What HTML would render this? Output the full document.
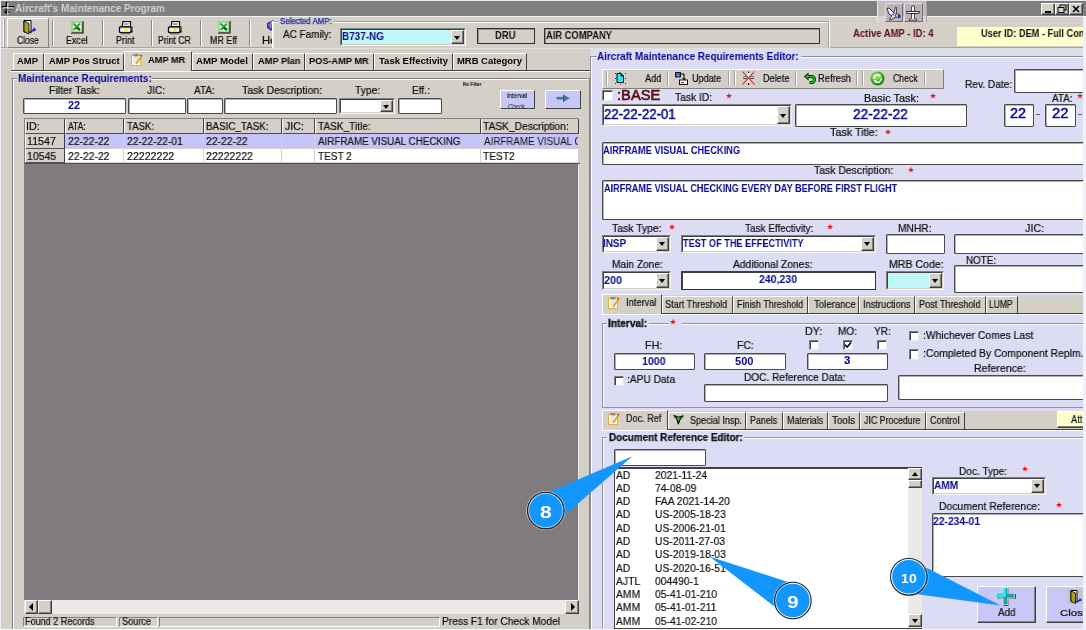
<!DOCTYPE html>
<html><head><meta charset="utf-8"><style>
html,body{margin:0;padding:0;width:1086px;height:630px;overflow:hidden;position:relative;font-family:"Liberation Sans",sans-serif}
body>div,body>svg{position:absolute}
body>div>div{position:absolute}
.t{height:20px;line-height:20px;white-space:nowrap;transform-origin:0 0;will-change:transform}
</style></head><body>
<div style="left:0px;top:0px;width:1086px;height:630px;background:#d4d0c8"></div>
<div style="left:0px;top:0px;width:1px;height:630px;background:#eef2fa"></div>
<div style="left:1px;top:1px;width:1085px;height:15px;background:#807f80"></div>
<div style="left:0px;top:0px;width:1086px;height:1px;background:#e6ecf6"></div>
<svg style="left:1px;top:1px" width="15" height="14" viewBox="0 0 15 14"><path d="M5.5 1 V13 M0.5 5.8 H13 M3.3 10.8 H8.5" stroke="#000" stroke-width="1.8"/><path d="M6.8 2 V13.5 M1.5 6.8 H12.5" stroke="#fff" stroke-width="1"/><path d="M2.5 8.5 H11.5" stroke="#555" stroke-width="1"/></svg>
<div class="t" style="left:15.45px;top:-1.30px;font-size:10.17px;font-weight:bold;color:#d4d0cc;transform:scaleX(0.9789);">Aircraft's Maintenance Program</div>
<div style="left:1041px;top:3px;width:14px;height:12px;background:#d4d0c8;border-top:1px solid #fff;border-left:1px solid #fff;border-bottom:1px solid #404040;border-right:1px solid #404040;box-sizing:border-box"></div>
<div style="left:1042px;top:4px;width:12px;height:10px;border-bottom:1px solid #808080;border-right:1px solid #808080;box-sizing:border-box"></div>
<div style="left:1055px;top:3px;width:14px;height:12px;background:#d4d0c8;border-top:1px solid #fff;border-left:1px solid #fff;border-bottom:1px solid #404040;border-right:1px solid #404040;box-sizing:border-box"></div>
<div style="left:1056px;top:4px;width:12px;height:10px;border-bottom:1px solid #808080;border-right:1px solid #808080;box-sizing:border-box"></div>
<div style="left:1069px;top:3px;width:14px;height:12px;background:#d4d0c8;border-top:1px solid #fff;border-left:1px solid #fff;border-bottom:1px solid #404040;border-right:1px solid #404040;box-sizing:border-box"></div>
<div style="left:1070px;top:4px;width:12px;height:10px;border-bottom:1px solid #808080;border-right:1px solid #808080;box-sizing:border-box"></div>
<svg style="left:1041px;top:3px" width="42" height="12" viewBox="0 0 42 12"><rect x="4" y="8" width="6" height="2" fill="#000"/><rect x="19" y="2" width="6" height="5" fill="none" stroke="#000" stroke-width="1"/><rect x="17" y="4.5" width="6" height="5" fill="#d4d0c8" stroke="#000" stroke-width="1"/><path d="M32 3 L38 9 M38 3 L32 9" stroke="#000" stroke-width="1.6"/></svg>
<div style="left:1px;top:16px;width:1085px;height:1px;background:#f4f4f4"></div>
<div style="left:1px;top:47px;width:1085px;height:1px;background:#a8a4a0"></div>
<div style="left:1px;top:48px;width:1085px;height:1px;background:#e4e2de"></div>
<div style="left:3px;top:19px;width:1px;height:28px;background:#fff"></div>
<div style="left:4px;top:19px;width:1px;height:28px;background:#a0a0a0"></div>
<div style="left:7px;top:18px;width:42px;height:30px;background:#d4d0c8;border-top:1px solid #fff;border-left:1px solid #fff;border-bottom:1px solid #808080;border-right:1px solid #808080;box-sizing:border-box"></div>
<div style="left:52px;top:20px;width:1px;height:26px;background:#888888"></div>
<div style="left:53px;top:20px;width:1px;height:26px;background:#fff"></div>
<div style="left:102px;top:20px;width:1px;height:26px;background:#888888"></div>
<div style="left:103px;top:20px;width:1px;height:26px;background:#fff"></div>
<div style="left:151px;top:20px;width:1px;height:26px;background:#888888"></div>
<div style="left:152px;top:20px;width:1px;height:26px;background:#fff"></div>
<div style="left:200px;top:20px;width:1px;height:26px;background:#888888"></div>
<div style="left:201px;top:20px;width:1px;height:26px;background:#fff"></div>
<div style="left:249px;top:20px;width:1px;height:26px;background:#888888"></div>
<div style="left:250px;top:20px;width:1px;height:26px;background:#fff"></div>
<div class="t" style="left:16.57px;top:30.70px;font-size:10.17px;font-weight:normal;color:#0c0c0c;transform:scaleX(0.8373);-webkit-text-stroke:0.2px #0c0c0c;">Close</div>
<div class="t" style="left:65.79px;top:30.70px;font-size:10.17px;font-weight:normal;color:#0c0c0c;transform:scaleX(0.8741);-webkit-text-stroke:0.2px #0c0c0c;">Excel</div>
<div class="t" style="left:115.88px;top:30.70px;font-size:10.17px;font-weight:normal;color:#0c0c0c;transform:scaleX(0.8858);-webkit-text-stroke:0.2px #0c0c0c;">Print</div>
<div class="t" style="left:158.20px;top:30.70px;font-size:10.17px;font-weight:normal;color:#0c0c0c;transform:scaleX(0.8551);-webkit-text-stroke:0.2px #0c0c0c;">Print CR</div>
<div class="t" style="left:209.99px;top:30.70px;font-size:10.17px;font-weight:normal;color:#0c0c0c;transform:scaleX(0.8766);-webkit-text-stroke:0.2px #0c0c0c;">MR Eff</div>
<div class="t" style="left:262.10px;top:30.70px;font-size:10.17px;font-weight:normal;color:#0c0c0c;transform:scaleX(1.1062);-webkit-text-stroke:0.2px #0c0c0c;">He</div>
<svg style="left:21px;top:19px" width="16" height="16" viewBox="0 0 16 16"><path d="M3 1.5 H10 V13 H3Z" fill="#fff" stroke="#000"/><path d="M3 2 L8 4.5 V15 L3 12.5 Z" fill="#a8a020" stroke="#000" stroke-width="0.8"/><path d="M9.5 14 Q11 10.5 13.5 11" stroke="#2020c0" stroke-width="1.5" fill="none"/><path d="M12 8.5 L15.5 10.5 L12.5 13Z" fill="#2020c0"/></svg>
<svg style="left:71px;top:21px" width="14" height="14" viewBox="0 0 14 14"><rect x="0" y="0" width="12" height="12" fill="#58a858"/><path d="M12 0 V12 H0" stroke="#4a4a30" stroke-width="1.6" fill="none"/><path d="M0.5 11.5 V0.5 H11.5" stroke="#90e090" stroke-width="1" fill="none"/><rect x="1.5" y="1.5" width="9" height="9" fill="#f4fff4"/><path d="M2.5 2.5 L9 9 M9 2.5 L2.5 9" stroke="#30a030" stroke-width="2"/><path d="M5.5 6.5 L9 9" stroke="#007000" stroke-width="2.2"/></svg>
<svg style="left:218px;top:21px" width="14" height="14" viewBox="0 0 14 14"><rect x="0" y="0" width="12" height="12" fill="#58a858"/><path d="M12 0 V12 H0" stroke="#4a4a30" stroke-width="1.6" fill="none"/><path d="M0.5 11.5 V0.5 H11.5" stroke="#90e090" stroke-width="1" fill="none"/><rect x="1.5" y="1.5" width="9" height="9" fill="#f4fff4"/><path d="M2.5 2.5 L9 9 M9 2.5 L2.5 9" stroke="#30a030" stroke-width="2"/><path d="M5.5 6.5 L9 9" stroke="#007000" stroke-width="2.2"/></svg>
<svg style="left:118px;top:20px" width="16" height="15" viewBox="0 0 16 15"><path d="M5 1.5 H12.5 V6.5 H4.2 Z" fill="#fff" stroke="#000" stroke-width="1.2"/><path d="M6 3.3 H11 M6 4.6 H10.5" stroke="#777" stroke-width="0.8"/><rect x="1.5" y="6.8" width="11.5" height="5.8" rx="1" fill="#d8d8d8" stroke="#000" stroke-width="1.3"/><rect x="2.6" y="8.8" width="9.5" height="2" fill="#fff"/><rect x="6.8" y="8.5" width="2.6" height="2.5" fill="#f0f000"/><rect x="13" y="6.5" width="1.6" height="6" fill="#000"/><rect x="13.4" y="7.6" width="0.9" height="0.9" fill="#fff"/><rect x="13.4" y="9.4" width="0.9" height="0.9" fill="#fff"/><rect x="3" y="12.8" width="9" height="1.6" fill="#707070"/></svg>
<svg style="left:167px;top:20px" width="16" height="15" viewBox="0 0 16 15"><path d="M5 1.5 H12.5 V6.5 H4.2 Z" fill="#fff" stroke="#000" stroke-width="1.2"/><path d="M6 3.3 H11 M6 4.6 H10.5" stroke="#777" stroke-width="0.8"/><rect x="1.5" y="6.8" width="11.5" height="5.8" rx="1" fill="#d8d8d8" stroke="#000" stroke-width="1.3"/><rect x="2.6" y="8.8" width="9.5" height="2" fill="#fff"/><rect x="6.8" y="8.5" width="2.6" height="2.5" fill="#f0f000"/><rect x="13" y="6.5" width="1.6" height="6" fill="#000"/><rect x="13.4" y="7.6" width="0.9" height="0.9" fill="#fff"/><rect x="13.4" y="9.4" width="0.9" height="0.9" fill="#fff"/><rect x="3" y="12.8" width="9" height="1.6" fill="#707070"/></svg>
<svg style="left:265px;top:19px" width="12" height="14" viewBox="0 0 12 14"><path d="M2 4 L8 1 L11 6 L6 12 L2 9Z" fill="#4030a0"/><path d="M3 5 L8 3 L9 6 L5 10Z" fill="#8070d0"/><circle cx="8" cy="3.5" r="1.8" fill="#e8e040"/></svg>
<div style="left:877px;top:1px;width:50px;height:21px;background:#c4bcbc;border-left:1px solid #ece8e8;border-right:1px solid #a8a4a4;box-sizing:border-box"></div>
<div style="left:878px;top:16px;width:48px;height:6px;background:#d8d4d0"></div>
<div style="left:884.5px;top:3px;width:18.5px;height:18.5px;background:#bab2b8;border-top:1px solid #e0dcdc;border-left:1px solid #e0dcdc;border-bottom:1px solid #707070;border-right:1px solid #707070;box-sizing:border-box"></div>
<div style="left:904px;top:3px;width:18.5px;height:18.5px;background:#bab2b8;border-top:1px solid #e0dcdc;border-left:1px solid #e0dcdc;border-bottom:1px solid #707070;border-right:1px solid #707070;box-sizing:border-box"></div>
<svg style="left:884px;top:3px" width="20" height="19" viewBox="0 0 20 19"><path d="M3 5.5 L5 5 L10 10 L15 11.5 Q17.5 12.5 16 14.5 L11 14 L7 17 L5.5 16.5 L8 13 L5 11 Z" fill="#f4f4f8" stroke="#222" stroke-width="0.9"/><path d="M10 9.5 L11.5 4 L12.5 4.5 L12.5 11" fill="#e8e8e8" stroke="#222" stroke-width="0.8"/><circle cx="9" cy="11.5" r="0.9" fill="#3030c0"/><circle cx="11.5" cy="12.5" r="0.9" fill="#3030c0"/><circle cx="14.8" cy="13" r="1.2" fill="#2020e0"/></svg>
<svg style="left:904px;top:3px" width="19" height="19" viewBox="0 0 19 19"><path d="M7.5 3.5 Q9 2 10.5 3.5 V15.5 L12.5 16 V17.5 L9 17 L5.5 17.5 V16 L7.5 15.5 Z" fill="#f4f4f4" stroke="#222" stroke-width="0.8"/><path d="M2.5 8.5 H15.5 Q16 10.5 14 10.5 H4 Q2 10.5 2.5 8.5Z" fill="#f0f0f0" stroke="#222" stroke-width="0.9"/></svg>
<div style="left:272px;top:21px;width:558px;height:27px;background:#d4d0c8"></div>
<div style="left:272px;top:21px;width:1px;height:27px;background:#fff"></div>
<div style="left:273px;top:22px;width:1px;height:26px;background:#f0f0f0"></div>
<div style="left:273px;top:21px;width:556px;height:1px;background:#a0a0a0"></div>
<div style="left:274px;top:22px;width:555px;height:1px;background:#fff"></div>
<div style="left:829px;top:21px;width:1px;height:27px;background:#fff"></div>
<div style="left:828px;top:21px;width:1px;height:27px;background:#a0a0a0"></div>
<div style="left:278px;top:20px;width:56px;height:4px;background:#d4d0c8"></div>
<div class="t" style="left:279.64px;top:12.30px;font-size:8.14px;font-weight:normal;color:#2020a8;transform:scaleX(0.9714);-webkit-text-stroke:0.25px #2020a8">Selected AMP:</div>
<div class="t" style="left:283.40px;top:23.80px;font-size:10.76px;font-weight:normal;color:#0c0c0c;transform:scaleX(0.9220);-webkit-text-stroke:0.2px #0c0c0c;">AC Family:</div>
<div style="left:340px;top:28px;width:126px;height:18px;background:#c0f8f8;border-top:1px solid #808080;border-left:1px solid #808080;border-bottom:1px solid #f4f4f4;border-right:1px solid #f4f4f4;box-sizing:border-box"></div>
<div style="left:341px;top:29px;width:124px;height:16px;border-top:1px solid #404040;border-left:1px solid #404040;border-bottom:1px solid #d4d0c8;border-right:1px solid #d4d0c8;box-sizing:border-box"></div>
<div style="left:451px;top:30px;width:13px;height:14px;background:#d4d0c8;border-top:1px solid #fff;border-left:1px solid #fff;border-bottom:1px solid #404040;border-right:1px solid #404040;box-sizing:border-box"></div>
<div style="left:452px;top:31px;width:11px;height:12px;border-bottom:1px solid #808080;border-right:1px solid #808080;box-sizing:border-box"></div>
<div style="left:454.0px;top:35.5px;width:0;height:0;border-left:3.5px solid transparent;border-right:3.5px solid transparent;border-top:4px solid #000"></div>
<div class="t" style="left:341.85px;top:26.10px;font-size:11.05px;font-weight:bold;color:#0c0c8c;transform:scaleX(0.9008);">B737-NG</div>
<div style="left:477px;top:28px;width:58px;height:16px;background:#d4d0c8;border:1px solid #303030;box-sizing:border-box"></div>
<div style="left:478px;top:29px;width:56px;height:14px;border-top:1px solid #909090;border-left:1px solid #909090;box-sizing:border-box"></div>
<div class="t" style="left:495.39px;top:25.40px;font-size:11.05px;font-weight:bold;color:#111;transform:scaleX(0.8544);">DRU</div>
<div style="left:544px;top:28px;width:276px;height:16px;background:#d4d0c8;border:1px solid #303030;box-sizing:border-box"></div>
<div style="left:545px;top:29px;width:274px;height:14px;border-top:1px solid #909090;border-left:1px solid #909090;box-sizing:border-box"></div>
<div class="t" style="left:545.77px;top:25.40px;font-size:11.05px;font-weight:bold;color:#111;transform:scaleX(0.8484);">AIR COMPANY</div>
<div class="t" style="left:852.86px;top:23.75px;font-size:10.03px;font-weight:bold;color:#5c0a10;transform:scaleX(0.9459);">Active AMP - ID: 4</div>
<div style="left:957px;top:27px;width:126px;height:19px;background:#ffffcc"></div>
<div class="t" style="left:981.05px;top:23.75px;font-size:10.03px;font-weight:bold;color:#111;transform:scaleX(0.9200);">User ID: DEM - Full Con</div>
<div style="left:11px;top:70px;width:580px;height:1px;background:#404040"></div>
<div style="left:11px;top:71px;width:580px;height:1px;background:#fff"></div>
<div style="left:13px;top:53px;width:31px;height:17px;background:#d4d0c8;border-left:1px solid #fff;border-top:1px solid #fff;border-right:1px solid #404040;box-sizing:border-box"></div>
<div class="t" style="left:17.27px;top:51.15px;font-size:9.45px;font-weight:bold;color:#000;transform:scaleX(0.9925);">AMP</div>
<div style="left:44px;top:53px;width:80px;height:17px;background:#d4d0c8;border-left:1px solid #fff;border-top:1px solid #fff;border-right:1px solid #404040;box-sizing:border-box"></div>
<div class="t" style="left:49.17px;top:51.15px;font-size:9.45px;font-weight:bold;color:#000;transform:scaleX(0.9931);">AMP Pos Struct</div>
<div style="left:124px;top:51px;width:68px;height:20px;background:#d4d0c8;border-left:1px solid #fff;border-top:1px solid #fff;border-right:1px solid #404040;box-sizing:border-box"></div>
<div class="t" style="left:148.27px;top:49.75px;font-size:9.45px;font-weight:bold;color:#000;transform:scaleX(0.9777);">AMP MR</div>
<svg style="left:130px;top:53px" width="14" height="14" viewBox="0 0 14 14"><rect x="1.5" y="2.5" width="9" height="10" fill="#fffef0" stroke="#e0b050"/><rect x="3.5" y="1" width="5" height="2.5" fill="#8a8a8a"/><path d="M3 5 H8 M3 7 H7 M3 9 H6" stroke="#c8c8c8" stroke-width="0.8"/><path d="M6 11 L11.5 3" stroke="#e8a020" stroke-width="2"/><path d="M10.5 2 L12 3.2" stroke="#c04020" stroke-width="1.5"/></svg>
<div style="left:192px;top:53px;width:61px;height:17px;background:#d4d0c8;border-left:1px solid #fff;border-top:1px solid #fff;border-right:1px solid #404040;box-sizing:border-box"></div>
<div class="t" style="left:195.66px;top:51.15px;font-size:9.45px;font-weight:bold;color:#000;transform:scaleX(1.0244);">AMP Model</div>
<div style="left:253px;top:53px;width:52px;height:17px;background:#d4d0c8;border-left:1px solid #fff;border-top:1px solid #fff;border-right:1px solid #404040;box-sizing:border-box"></div>
<div class="t" style="left:257.57px;top:51.15px;font-size:9.45px;font-weight:bold;color:#000;transform:scaleX(0.9810);">AMP Plan</div>
<div style="left:305px;top:53px;width:69px;height:17px;background:#d4d0c8;border-left:1px solid #fff;border-top:1px solid #fff;border-right:1px solid #404040;box-sizing:border-box"></div>
<div class="t" style="left:309.40px;top:51.15px;font-size:9.45px;font-weight:bold;color:#000;transform:scaleX(0.9758);">POS-AMP MR</div>
<div style="left:374px;top:53px;width:79px;height:17px;background:#d4d0c8;border-left:1px solid #fff;border-top:1px solid #fff;border-right:1px solid #404040;box-sizing:border-box"></div>
<div class="t" style="left:378.90px;top:51.15px;font-size:9.45px;font-weight:bold;color:#000;transform:scaleX(1.0074);">Task Effectivity</div>
<div style="left:453px;top:53px;width:74px;height:17px;background:#d4d0c8;border-left:1px solid #fff;border-top:1px solid #fff;border-right:1px solid #404040;box-sizing:border-box"></div>
<div class="t" style="left:457.39px;top:51.15px;font-size:9.45px;font-weight:bold;color:#000;transform:scaleX(0.9926);">MRB Category</div>
<div style="left:12px;top:78px;width:578px;height:560px;border:1px solid #808080;box-sizing:border-box"></div>
<div style="left:13px;top:79px;width:576px;height:558px;border-left:1px solid #fff;border-top:1px solid #fff;box-sizing:border-box"></div>
<div style="left:17px;top:76px;width:135px;height:4px;background:#d4d0c8"></div>
<div class="t" style="left:17.55px;top:67.85px;font-size:11.19px;font-weight:bold;color:#0a0a98;transform:scaleX(0.8969);">Maintenance Requirements:</div>
<div class="t" style="left:48.96px;top:80.05px;font-size:10.90px;font-weight:normal;color:#0c0c0c;transform:scaleX(0.9667);-webkit-text-stroke:0.2px #0c0c0c;">Filter Task:</div>
<div class="t" style="left:147.35px;top:80.05px;font-size:10.90px;font-weight:normal;color:#0c0c0c;transform:scaleX(0.9365);-webkit-text-stroke:0.2px #0c0c0c;">JIC:</div>
<div class="t" style="left:194.00px;top:80.05px;font-size:10.90px;font-weight:normal;color:#0c0c0c;transform:scaleX(0.9196);-webkit-text-stroke:0.2px #0c0c0c;">ATA:</div>
<div class="t" style="left:242.29px;top:80.05px;font-size:10.90px;font-weight:normal;color:#0c0c0c;transform:scaleX(0.9668);-webkit-text-stroke:0.2px #0c0c0c;">Task Description:</div>
<div class="t" style="left:355.19px;top:80.05px;font-size:10.90px;font-weight:normal;color:#0c0c0c;transform:scaleX(0.9487);-webkit-text-stroke:0.2px #0c0c0c;">Type:</div>
<div class="t" style="left:412.08px;top:80.05px;font-size:10.90px;font-weight:normal;color:#0c0c0c;transform:scaleX(0.9346);-webkit-text-stroke:0.2px #0c0c0c;">Eff.:</div>
<div class="t" style="left:462.61px;top:73.75px;font-size:5.09px;font-weight:bold;color:#000;transform:scaleX(0.8901);">No Filter</div>
<div style="left:23px;top:98px;width:103px;height:16px;background:#fff;border:1px solid #4a4a4a;border-radius:1px;box-sizing:border-box"></div>
<div style="left:24px;top:99px;width:101px;height:14px;border-top:1px solid #b0b0b0;border-left:1px solid #b0b0b0;box-sizing:border-box"></div>
<div class="t" style="left:67.98px;top:96.40px;font-size:10.47px;font-weight:bold;color:#0c0c8c;transform:scaleX(1.0333);">22</div>
<div style="left:128px;top:98px;width:58px;height:16px;background:#fff;border:1px solid #4a4a4a;border-radius:1px;box-sizing:border-box"></div>
<div style="left:129px;top:99px;width:56px;height:14px;border-top:1px solid #b0b0b0;border-left:1px solid #b0b0b0;box-sizing:border-box"></div>
<div style="left:187px;top:98px;width:36px;height:16px;background:#fff;border:1px solid #4a4a4a;border-radius:1px;box-sizing:border-box"></div>
<div style="left:188px;top:99px;width:34px;height:14px;border-top:1px solid #b0b0b0;border-left:1px solid #b0b0b0;box-sizing:border-box"></div>
<div style="left:224px;top:98px;width:113px;height:16px;background:#fff;border:1px solid #4a4a4a;border-radius:1px;box-sizing:border-box"></div>
<div style="left:225px;top:99px;width:111px;height:14px;border-top:1px solid #b0b0b0;border-left:1px solid #b0b0b0;box-sizing:border-box"></div>
<div style="left:339px;top:98px;width:56px;height:16px;background:#fff;border-top:1px solid #808080;border-left:1px solid #808080;border-bottom:1px solid #f4f4f4;border-right:1px solid #f4f4f4;box-sizing:border-box"></div>
<div style="left:340px;top:99px;width:54px;height:14px;border-top:1px solid #404040;border-left:1px solid #404040;border-bottom:1px solid #d4d0c8;border-right:1px solid #d4d0c8;box-sizing:border-box"></div>
<div style="left:380px;top:100px;width:13px;height:12px;background:#d4d0c8;border-top:1px solid #fff;border-left:1px solid #fff;border-bottom:1px solid #404040;border-right:1px solid #404040;box-sizing:border-box"></div>
<div style="left:381px;top:101px;width:11px;height:10px;border-bottom:1px solid #808080;border-right:1px solid #808080;box-sizing:border-box"></div>
<div style="left:383.0px;top:104.5px;width:0;height:0;border-left:3.5px solid transparent;border-right:3.5px solid transparent;border-top:4px solid #000"></div>
<div style="left:398px;top:98px;width:44px;height:16px;background:#fff;border:1px solid #4a4a4a;border-radius:1px;box-sizing:border-box"></div>
<div style="left:399px;top:99px;width:42px;height:14px;border-top:1px solid #b0b0b0;border-left:1px solid #b0b0b0;box-sizing:border-box"></div>
<div style="left:500px;top:90px;width:35px;height:19px;background:#c8c8f8;border-top:1px solid #fff;border-left:1px solid #fff;border-bottom:1px solid #404040;border-right:1px solid #404040;box-sizing:border-box"></div>
<div class="t" style="left:507.43px;top:85.85px;font-size:7.41px;font-weight:bold;color:#222;transform:scaleX(0.7602);">Interval</div>
<div style="left:501px;top:98px;width:33px;height:10px;overflow:hidden">
<div class="t" style="left:7.40px;top:-1.30px;font-size:7.85px;color:#222;transform:scaleX(0.7626)">Check</div></div>
<div style="left:545px;top:90px;width:36px;height:19px;background:#c8c8f8;border-top:1px solid #fff;border-left:1px solid #fff;border-bottom:1px solid #404040;border-right:1px solid #404040;box-sizing:border-box"></div>
<svg style="left:545px;top:90px" width="36" height="19" viewBox="0 0 36 19"><path d="M11.5 8.2 H20" stroke="#4a7898" stroke-width="2.6"/><path d="M18 4.5 L25 8.2 L18 12Z" fill="#4a7898"/><path d="M18.5 5 V11.5" stroke="#2a5878" stroke-width="1"/></svg>
<div style="left:24px;top:118px;width:555px;height:482px;background:#7f7b7f;border-top:1px solid #808080;border-left:1px solid #808080;border-right:1px solid #ececec;box-sizing:border-box"></div>
<div style="left:25px;top:119px;width:40px;height:15px;background:#d4d0c8;border-left:1px solid #fff;border-right:1px solid #404040;border-bottom:1px solid #505050;box-sizing:border-box"></div>
<div class="t" style="left:26.43px;top:115.65px;font-size:10.61px;font-weight:normal;color:#0c0c0c;transform:scaleX(1.0196);-webkit-text-stroke:0.2px #0c0c0c;">ID:</div>
<div style="left:65px;top:119px;width:59px;height:15px;background:#d4d0c8;border-left:1px solid #fff;border-right:1px solid #404040;border-bottom:1px solid #505050;box-sizing:border-box"></div>
<div class="t" style="left:67.70px;top:115.65px;font-size:10.61px;font-weight:normal;color:#0c0c0c;transform:scaleX(0.8024);-webkit-text-stroke:0.2px #0c0c0c;">ATA:</div>
<div style="left:124px;top:119px;width:80px;height:15px;background:#d4d0c8;border-left:1px solid #fff;border-right:1px solid #404040;border-bottom:1px solid #505050;box-sizing:border-box"></div>
<div class="t" style="left:126.71px;top:115.65px;font-size:10.61px;font-weight:normal;color:#0c0c0c;transform:scaleX(0.9077);-webkit-text-stroke:0.2px #0c0c0c;">TASK:</div>
<div style="left:204px;top:119px;width:78px;height:15px;background:#d4d0c8;border-left:1px solid #fff;border-right:1px solid #404040;border-bottom:1px solid #505050;box-sizing:border-box"></div>
<div class="t" style="left:205.61px;top:115.65px;font-size:10.61px;font-weight:normal;color:#0c0c0c;transform:scaleX(0.9250);-webkit-text-stroke:0.2px #0c0c0c;">BASIC_TASK:</div>
<div style="left:282px;top:119px;width:33px;height:15px;background:#d4d0c8;border-left:1px solid #fff;border-right:1px solid #404040;border-bottom:1px solid #505050;box-sizing:border-box"></div>
<div class="t" style="left:284.54px;top:115.65px;font-size:10.61px;font-weight:normal;color:#0c0c0c;transform:scaleX(0.9959);-webkit-text-stroke:0.2px #0c0c0c;">JIC:</div>
<div style="left:315px;top:119px;width:166px;height:15px;background:#d4d0c8;border-left:1px solid #fff;border-right:1px solid #404040;border-bottom:1px solid #505050;box-sizing:border-box"></div>
<div class="t" style="left:318.40px;top:115.65px;font-size:10.61px;font-weight:normal;color:#0c0c0c;transform:scaleX(0.9508);-webkit-text-stroke:0.2px #0c0c0c;">TASK_Title:</div>
<div style="left:481px;top:119px;width:98px;height:15px;background:#d4d0c8;border-left:1px solid #fff;border-right:1px solid #404040;border-bottom:1px solid #505050;box-sizing:border-box"></div>
<div class="t" style="left:483.40px;top:115.65px;font-size:10.61px;font-weight:normal;color:#0c0c0c;transform:scaleX(0.9647);-webkit-text-stroke:0.2px #0c0c0c;">TASK_Description:</div>
<div style="left:25px;top:134.0px;width:40px;height:14.5px;background:#d4d0c8;border-left:1px solid #fff;border-right:1px solid #404040;border-bottom:1px solid #505050;box-sizing:border-box"></div>
<div class="t" style="left:26.80px;top:131.15px;font-size:10.61px;font-weight:normal;color:#111;transform:scaleX(1.0063);-webkit-text-stroke:0.2px #111;">11547</div>
<div style="left:65px;top:134.0px;width:59px;height:14.5px;background:#c4c4f8;border-right:1px solid #d0d0d0;border-bottom:1px solid #d0d0d0;box-sizing:border-box"></div>
<div class="t" style="left:68.08px;top:131.15px;font-size:10.61px;font-weight:normal;color:#111;transform:scaleX(0.9750);-webkit-text-stroke:0.2px #111;">22-22-22</div>
<div style="left:124px;top:134.0px;width:80px;height:14.5px;background:#c4c4f8;border-right:1px solid #d0d0d0;border-bottom:1px solid #d0d0d0;box-sizing:border-box"></div>
<div class="t" style="left:127.09px;top:131.15px;font-size:10.61px;font-weight:normal;color:#111;transform:scaleX(0.9636);-webkit-text-stroke:0.2px #111;">22-22-22-01</div>
<div style="left:204px;top:134.0px;width:78px;height:14.5px;background:#c4c4f8;border-right:1px solid #d0d0d0;border-bottom:1px solid #d0d0d0;box-sizing:border-box"></div>
<div class="t" style="left:206.08px;top:131.15px;font-size:10.61px;font-weight:normal;color:#111;transform:scaleX(0.9799);-webkit-text-stroke:0.2px #111;">22-22-22</div>
<div style="left:282px;top:134.0px;width:33px;height:14.5px;background:#c4c4f8;border-right:1px solid #d0d0d0;border-bottom:1px solid #d0d0d0;box-sizing:border-box"></div>
<div style="left:315px;top:134.0px;width:166px;height:14.5px;background:#c4c4f8;border-right:1px solid #d0d0d0;border-bottom:1px solid #d0d0d0;box-sizing:border-box"></div>
<div class="t" style="left:318.30px;top:131.15px;font-size:10.61px;font-weight:normal;color:#111;transform:scaleX(0.9242);-webkit-text-stroke:0.2px #111;">AIRFRAME VISUAL CHECKING</div>
<div style="left:481px;top:134.0px;width:98px;height:14.5px;background:#c4c4f8;border-right:1px solid #d0d0d0;border-bottom:1px solid #d0d0d0;box-sizing:border-box"></div>
<div style="left:481px;top:134.0px;width:97px;height:14px;overflow:hidden">
<div class="t" style="left:2.60px;top:-1.85px;font-size:10.03px;color:#111;transform:scaleX(0.9778)">AIRFRAME VISUAL C</div></div>
<div style="left:25px;top:148.5px;width:40px;height:14.5px;background:#d4d0c8;border-left:1px solid #fff;border-right:1px solid #404040;border-bottom:1px solid #505050;box-sizing:border-box"></div>
<div class="t" style="left:26.81px;top:145.95px;font-size:10.61px;font-weight:normal;color:#111;transform:scaleX(0.9902);-webkit-text-stroke:0.2px #111;">10545</div>
<div style="left:65px;top:148.5px;width:59px;height:14.5px;background:#fff;border-right:1px solid #d0d0d0;border-bottom:1px solid #d0d0d0;box-sizing:border-box"></div>
<div class="t" style="left:68.08px;top:145.95px;font-size:10.61px;font-weight:normal;color:#111;transform:scaleX(0.9750);-webkit-text-stroke:0.2px #111;">22-22-22</div>
<div style="left:124px;top:148.5px;width:80px;height:14.5px;background:#fff;border-right:1px solid #d0d0d0;border-bottom:1px solid #d0d0d0;box-sizing:border-box"></div>
<div class="t" style="left:126.77px;top:145.95px;font-size:10.61px;font-weight:normal;color:#111;transform:scaleX(0.9998);-webkit-text-stroke:0.2px #111;">22222222</div>
<div style="left:204px;top:148.5px;width:78px;height:14.5px;background:#fff;border-right:1px solid #d0d0d0;border-bottom:1px solid #d0d0d0;box-sizing:border-box"></div>
<div class="t" style="left:206.07px;top:145.95px;font-size:10.61px;font-weight:normal;color:#111;transform:scaleX(0.9933);-webkit-text-stroke:0.2px #111;">22222222</div>
<div style="left:282px;top:148.5px;width:33px;height:14.5px;background:#fff;border-right:1px solid #d0d0d0;border-bottom:1px solid #d0d0d0;box-sizing:border-box"></div>
<div style="left:315px;top:148.5px;width:166px;height:14.5px;background:#fff;border-right:1px solid #d0d0d0;border-bottom:1px solid #d0d0d0;box-sizing:border-box"></div>
<div class="t" style="left:318.10px;top:145.95px;font-size:10.61px;font-weight:normal;color:#111;transform:scaleX(0.9439);-webkit-text-stroke:0.2px #111;">TEST 2</div>
<div style="left:481px;top:148.5px;width:98px;height:14.5px;background:#fff;border-right:1px solid #d0d0d0;border-bottom:1px solid #d0d0d0;box-sizing:border-box"></div>
<div class="t" style="left:483.30px;top:145.95px;font-size:10.61px;font-weight:normal;color:#111;transform:scaleX(0.9595);-webkit-text-stroke:0.2px #111;">TEST2</div>
<div style="left:24px;top:163px;width:556px;height:1px;background:#505050"></div>
<div style="left:24px;top:600px;width:555px;height:14px;background:#ebeae6"></div>
<div style="left:25px;top:600px;width:13px;height:14px;background:#d4d0c8;border-top:1px solid #fff;border-left:1px solid #fff;border-bottom:1px solid #404040;border-right:1px solid #404040;box-sizing:border-box"></div>
<div style="left:26px;top:601px;width:11px;height:12px;border-bottom:1px solid #808080;border-right:1px solid #808080;box-sizing:border-box"></div>
<div style="left:29px;top:603px;width:0;height:0;border-top:4px solid transparent;border-bottom:4px solid transparent;border-right:4px solid #000"></div>
<div style="left:38px;top:600px;width:14px;height:14px;background:#d4d0c8;border-top:1px solid #fff;border-left:1px solid #fff;border-bottom:1px solid #404040;border-right:1px solid #404040;box-sizing:border-box"></div>
<div style="left:39px;top:601px;width:12px;height:12px;border-bottom:1px solid #808080;border-right:1px solid #808080;box-sizing:border-box"></div>
<div style="left:565px;top:600px;width:14px;height:14px;background:#d4d0c8;border-top:1px solid #fff;border-left:1px solid #fff;border-bottom:1px solid #404040;border-right:1px solid #404040;box-sizing:border-box"></div>
<div style="left:566px;top:601px;width:12px;height:12px;border-bottom:1px solid #808080;border-right:1px solid #808080;box-sizing:border-box"></div>
<div style="left:571px;top:603px;width:0;height:0;border-top:4px solid transparent;border-bottom:4px solid transparent;border-left:4px solid #000"></div>
<div style="left:23px;top:617px;width:94px;height:10px;border-top:1px solid #808080;border-left:1px solid #808080;border-bottom:1px solid #fff;border-right:1px solid #fff;box-sizing:border-box"></div>
<div style="left:119px;top:617px;width:39px;height:10px;border-top:1px solid #808080;border-left:1px solid #808080;border-bottom:1px solid #fff;border-right:1px solid #fff;box-sizing:border-box"></div>
<div style="left:159px;top:617px;width:281px;height:10px;border-top:1px solid #808080;border-left:1px solid #808080;border-bottom:1px solid #fff;border-right:1px solid #fff;box-sizing:border-box"></div>
<div class="t" style="left:25.07px;top:612.20px;font-size:10.47px;font-weight:normal;color:#111;transform:scaleX(0.8664);-webkit-text-stroke:0.2px #111;">Found 2 Records</div>
<div class="t" style="left:122.39px;top:612.20px;font-size:10.47px;font-weight:normal;color:#111;transform:scaleX(0.8749);-webkit-text-stroke:0.2px #111;">Source</div>
<div class="t" style="left:442.18px;top:610.70px;font-size:10.90px;font-weight:normal;color:#0c0c0c;transform:scaleX(0.9374);-webkit-text-stroke:0.2px #0c0c0c;">Press F1 for Check Model</div>
<div style="left:590px;top:49px;width:493px;height:581px;background:#dcdcf4"></div>
<div style="left:590px;top:56px;width:501px;height:580px;border:1px solid #909090;box-sizing:border-box"></div>
<div style="left:591px;top:57px;width:499px;height:578px;border-left:1px solid #fff;border-top:1px solid #fff;box-sizing:border-box"></div>
<div style="left:597px;top:54px;width:204px;height:4px;background:#dcdcf4"></div>
<div class="t" style="left:597.35px;top:46.30px;font-size:11.05px;font-weight:bold;color:#0a0a98;transform:scaleX(0.8972);">Aircraft Maintenance Requirements Editor:</div>
<div style="left:602px;top:69px;width:342px;height:20px;background:#d4d0c8;border-top:1px solid #fff;border-left:1px solid #fff;border-bottom:1px solid #808080;border-right:1px solid #808080;box-sizing:border-box"></div>
<div style="left:606px;top:71px;width:1px;height:15px;background:#a0a0a0"></div>
<div style="left:607px;top:71px;width:1px;height:15px;background:#fff"></div>
<div style="left:667px;top:71px;width:1px;height:15px;background:#a0a0a0"></div>
<div style="left:668px;top:71px;width:1px;height:15px;background:#fff"></div>
<div style="left:728px;top:71px;width:1px;height:15px;background:#a0a0a0"></div>
<div style="left:729px;top:71px;width:1px;height:15px;background:#fff"></div>
<div style="left:734px;top:71px;width:1px;height:15px;background:#a0a0a0"></div>
<div style="left:735px;top:71px;width:1px;height:15px;background:#fff"></div>
<div style="left:795px;top:71px;width:1px;height:15px;background:#a0a0a0"></div>
<div style="left:796px;top:71px;width:1px;height:15px;background:#fff"></div>
<div style="left:856px;top:71px;width:1px;height:15px;background:#a0a0a0"></div>
<div style="left:857px;top:71px;width:1px;height:15px;background:#fff"></div>
<div style="left:862px;top:71px;width:1px;height:15px;background:#a0a0a0"></div>
<div style="left:863px;top:71px;width:1px;height:15px;background:#fff"></div>
<div style="left:924px;top:71px;width:1px;height:15px;background:#a0a0a0"></div>
<div style="left:925px;top:71px;width:1px;height:15px;background:#fff"></div>
<div class="t" style="left:644.70px;top:67.90px;font-size:10.90px;font-weight:normal;color:#0c0c0c;transform:scaleX(0.8427);-webkit-text-stroke:0.2px #0c0c0c;">Add</div>
<div class="t" style="left:692.12px;top:67.90px;font-size:10.90px;font-weight:normal;color:#0c0c0c;transform:scaleX(0.8318);-webkit-text-stroke:0.2px #0c0c0c;">Update</div>
<div class="t" style="left:762.77px;top:67.90px;font-size:10.90px;font-weight:normal;color:#0c0c0c;transform:scaleX(0.8379);-webkit-text-stroke:0.2px #0c0c0c;">Delete</div>
<div class="t" style="left:817.65px;top:67.90px;font-size:10.90px;font-weight:normal;color:#0c0c0c;transform:scaleX(0.8627);-webkit-text-stroke:0.2px #0c0c0c;">Refresh</div>
<div class="t" style="left:893.07px;top:67.90px;font-size:10.90px;font-weight:normal;color:#0c0c0c;transform:scaleX(0.7957);-webkit-text-stroke:0.2px #0c0c0c;">Check</div>
<svg style="left:612px;top:70px" width="16" height="16" viewBox="0 0 16 16"><path d="M5 3.5 H9 L11.5 6 V12.5 H5 Z" fill="#20f0f8" stroke="#000" stroke-width="1"/><path d="M9 3.5 V6 H11.5" fill="#000" stroke="#000" stroke-width="0.8"/><g fill="#333"><rect x="3" y="3" width="1" height="1"/><rect x="13" y="3" width="1" height="1"/><rect x="3" y="13" width="1" height="1"/><rect x="13" y="13" width="1" height="1"/><rect x="3" y="8" width="1" height="1"/><rect x="13" y="8" width="1" height="1"/><rect x="8" y="13.5" width="1" height="1"/><rect x="7.5" y="2" width="1" height="1"/></g></svg>
<svg style="left:674px;top:71px" width="15" height="15" viewBox="0 0 15 15"><rect x="1.5" y="1.5" width="5" height="4.5" fill="#1030c0" stroke="#000" stroke-width="0.8"/><path d="M2.5 3 H5.5 M2.5 4.7 H5.5" stroke="#a0e0ff" stroke-width="0.8"/><path d="M7 3 H10 V8.5 M8.7 7 L10 8.8 L11.3 7" stroke="#000" stroke-width="1" fill="none"/><rect x="5.5" y="9" width="8" height="4.5" fill="#fff" stroke="#000" stroke-width="0.9"/><rect x="7" y="11" width="3" height="1.2" fill="#e02020"/></svg>
<svg style="left:741px;top:70px" width="15" height="16" viewBox="0 0 15 16"><path d="M7.5 1.5 V15 M2.5 7 H12.5 M2.5 8.5 H12.5" stroke="#000" stroke-width="1.1"/><path d="M6.5 3 H8.5 V13 H6.5Z M3 7.3 H12 V8.2 H3Z" fill="#fff"/><path d="M1.5 1.5 L13.5 14.5 M13.5 1.5 L1.5 14.5" stroke="#e01818" stroke-width="1.1"/></svg>
<svg style="left:803px;top:71px" width="14" height="15" viewBox="0 0 14 15"><path d="M4 5.5 H8.5 A3 3 0 0 1 8.5 11.5 H6.5" stroke="#000" stroke-width="3" fill="none"/><path d="M1 5.5 L5.5 1.5 V9.5Z" fill="#000"/><path d="M4 5.5 H8.5 A3 3 0 0 1 8.5 11.5 H6.5" stroke="#20d020" stroke-width="1.6" fill="none"/><path d="M2.3 5.5 L4.8 3.2 V7.8Z" fill="#20d020"/></svg>
<svg style="left:870px;top:71px" width="15" height="15" viewBox="0 0 15 15"><defs><radialGradient id="cg" cx="0.4" cy="0.35" r="0.7"><stop offset="0" stop-color="#b8f080"/><stop offset="0.6" stop-color="#40b020"/><stop offset="1" stop-color="#187010"/></radialGradient></defs><circle cx="7.5" cy="7.5" r="7" fill="url(#cg)"/><path d="M4 8 A3.5 3.5 0 0 1 10 4.8 M11 7 A3.5 3.5 0 0 1 5 10.2" stroke="#fff" stroke-width="1.3" fill="none"/><path d="M9 3 L11.5 5.5 L8.5 6Z M6 12 L3.5 9.5 L6.5 9Z" fill="#fff"/></svg>
<div class="t" style="left:965.19px;top:73.70px;font-size:10.90px;font-weight:normal;color:#0c0c0c;transform:scaleX(0.9317);-webkit-text-stroke:0.2px #0c0c0c;">Rev. Date:</div>
<div style="left:1014px;top:69px;width:72px;height:24px;background:#fff;border:1px solid #4a4a4a;border-radius:1px;box-sizing:border-box"></div>
<div style="left:1015px;top:70px;width:70px;height:22px;border-top:1px solid #b0b0b0;border-left:1px solid #b0b0b0;box-sizing:border-box"></div>
<div style="left:602px;top:90px;width:11px;height:11px;background:#fff;border-top:1px solid #808080;border-left:1px solid #808080;border-bottom:1px solid #e8e8e8;border-right:1px solid #e8e8e8;box-sizing:border-box"></div>
<div style="left:603px;top:91px;width:9px;height:9px;border-top:1px solid #404040;border-left:1px solid #404040;box-sizing:border-box"></div>
<div class="t" style="left:617.08px;top:84.60px;font-size:14.53px;font-weight:normal;color:#5a0c10;transform:scaleX(1.0118);-webkit-text-stroke:0.6px #5a0c10">:BASE</div>
<div class="t" style="left:674.79px;top:87.30px;font-size:10.90px;font-weight:normal;color:#0c0c0c;transform:scaleX(0.9422);-webkit-text-stroke:0.2px #0c0c0c;">Task ID:</div>
<svg style="left:725px;top:91.5px" width="8" height="8" viewBox="0 0 8 8"><path d="M1.6 3.6 H6.4 M4 1.6 V3.8 M4 3.8 L2.6 6 M4 3.8 L5.4 6" stroke="#ff0a0a" stroke-width="1.05"/></svg>
<div style="left:602px;top:104px;width:190px;height:22px;background:#fff;border-top:1px solid #808080;border-left:1px solid #808080;border-bottom:1px solid #f4f4f4;border-right:1px solid #f4f4f4;box-sizing:border-box"></div>
<div style="left:603px;top:105px;width:188px;height:20px;border-top:1px solid #404040;border-left:1px solid #404040;border-bottom:1px solid #d4d0c8;border-right:1px solid #d4d0c8;box-sizing:border-box"></div>
<div style="left:777px;top:106px;width:13px;height:18px;background:#d4d0c8;border-top:1px solid #fff;border-left:1px solid #fff;border-bottom:1px solid #404040;border-right:1px solid #404040;box-sizing:border-box"></div>
<div style="left:778px;top:107px;width:11px;height:16px;border-bottom:1px solid #808080;border-right:1px solid #808080;box-sizing:border-box"></div>
<div style="left:780.0px;top:113.5px;width:0;height:0;border-left:3.5px solid transparent;border-right:3.5px solid transparent;border-top:4px solid #000"></div>
<div class="t" style="left:603.94px;top:104.35px;font-size:14.39px;font-weight:normal;color:#0a0a90;transform:scaleX(0.9145);-webkit-text-stroke:0.5px #0a0a90">22-22-22-01</div>
<div class="t" style="left:864.43px;top:87.60px;font-size:10.90px;font-weight:normal;color:#0c0c0c;transform:scaleX(1.0021);-webkit-text-stroke:0.2px #0c0c0c;">Basic Task:</div>
<svg style="left:929px;top:92px" width="8" height="8" viewBox="0 0 8 8"><path d="M1.6 3.6 H6.4 M4 1.6 V3.8 M4 3.8 L2.6 6 M4 3.8 L5.4 6" stroke="#ff0a0a" stroke-width="1.05"/></svg>
<div style="left:795px;top:104px;width:172px;height:23px;background:#fff;border:1px solid #4a4a4a;border-radius:1px;box-sizing:border-box"></div>
<div style="left:796px;top:105px;width:170px;height:21px;border-top:1px solid #b0b0b0;border-left:1px solid #b0b0b0;box-sizing:border-box"></div>
<div class="t" style="left:853.31px;top:103.65px;font-size:14.39px;font-weight:normal;color:#0a0a90;transform:scaleX(0.9521);-webkit-text-stroke:0.5px #0a0a90">22-22-22</div>
<div class="t" style="left:1052.30px;top:87.60px;font-size:10.90px;font-weight:normal;color:#0c0c0c;transform:scaleX(0.9104);-webkit-text-stroke:0.2px #0c0c0c;">ATA:</div>
<svg style="left:1076px;top:92px" width="8" height="8" viewBox="0 0 8 8"><path d="M1.6 3.6 H6.4 M4 1.6 V3.8 M4 3.8 L2.6 6 M4 3.8 L5.4 6" stroke="#ff0a0a" stroke-width="1.05"/></svg>
<div style="left:1004px;top:104px;width:30px;height:23px;background:#fff;border:1px solid #4a4a4a;border-radius:1px;box-sizing:border-box"></div>
<div style="left:1005px;top:105px;width:28px;height:21px;border-top:1px solid #b0b0b0;border-left:1px solid #b0b0b0;box-sizing:border-box"></div>
<div class="t" style="left:1010.28px;top:103.45px;font-size:14.39px;font-weight:normal;color:#0a0a90;transform:scaleX(0.9996);-webkit-text-stroke:0.5px #0a0a90">22</div>
<div style="left:1036px;top:114px;width:4px;height:1px;background:#606060"></div>
<div style="left:1045px;top:104px;width:31px;height:23px;background:#fff;border:1px solid #4a4a4a;border-radius:1px;box-sizing:border-box"></div>
<div style="left:1046px;top:105px;width:29px;height:21px;border-top:1px solid #b0b0b0;border-left:1px solid #b0b0b0;box-sizing:border-box"></div>
<div class="t" style="left:1051.56px;top:103.45px;font-size:14.39px;font-weight:normal;color:#0a0a90;transform:scaleX(1.0270);-webkit-text-stroke:0.5px #0a0a90">22</div>
<div style="left:1078px;top:114px;width:4px;height:1px;background:#606060"></div>
<div class="t" style="left:829.59px;top:122.40px;font-size:10.90px;font-weight:normal;color:#0c0c0c;transform:scaleX(0.9850);-webkit-text-stroke:0.2px #0c0c0c;">Task Title:</div>
<svg style="left:884px;top:127.5px" width="8" height="8" viewBox="0 0 8 8"><path d="M1.6 3.6 H6.4 M4 1.6 V3.8 M4 3.8 L2.6 6 M4 3.8 L5.4 6" stroke="#ff0a0a" stroke-width="1.05"/></svg>
<div style="left:602px;top:142px;width:490px;height:23px;background:#fff;border:1px solid #4a4a4a;border-radius:1px;box-sizing:border-box"></div>
<div style="left:603px;top:143px;width:488px;height:21px;border-top:1px solid #b0b0b0;border-left:1px solid #b0b0b0;box-sizing:border-box"></div>
<div class="t" style="left:602.97px;top:139.70px;font-size:11.34px;font-weight:bold;color:#0a0a90;transform:scaleX(0.8171);">AIRFRAME VISUAL CHECKING</div>
<div class="t" style="left:813.79px;top:160.40px;font-size:10.90px;font-weight:normal;color:#0c0c0c;transform:scaleX(0.9558);-webkit-text-stroke:0.2px #0c0c0c;">Task Description:</div>
<svg style="left:906.5px;top:165.5px" width="8" height="8" viewBox="0 0 8 8"><path d="M1.6 3.6 H6.4 M4 1.6 V3.8 M4 3.8 L2.6 6 M4 3.8 L5.4 6" stroke="#ff0a0a" stroke-width="1.05"/></svg>
<div style="left:602px;top:179.5px;width:490px;height:40px;background:#fff;border:1px solid #4a4a4a;border-radius:1px;box-sizing:border-box"></div>
<div style="left:603px;top:180.5px;width:488px;height:38px;border-top:1px solid #b0b0b0;border-left:1px solid #b0b0b0;box-sizing:border-box"></div>
<div class="t" style="left:603.67px;top:178.20px;font-size:11.34px;font-weight:bold;color:#0a0a90;transform:scaleX(0.8035);">AIRFRAME VISUAL CHECKING EVERY DAY BEFORE FIRST FLIGHT</div>
<div class="t" style="left:612.29px;top:217.50px;font-size:10.90px;font-weight:normal;color:#0c0c0c;transform:scaleX(0.9558);-webkit-text-stroke:0.2px #0c0c0c;">Task Type:</div>
<svg style="left:667.5px;top:222.5px" width="8" height="8" viewBox="0 0 8 8"><path d="M1.6 3.6 H6.4 M4 1.6 V3.8 M4 3.8 L2.6 6 M4 3.8 L5.4 6" stroke="#ff0a0a" stroke-width="1.05"/></svg>
<div style="left:602px;top:234.5px;width:69px;height:18.5px;background:#fff;border-top:1px solid #808080;border-left:1px solid #808080;border-bottom:1px solid #f4f4f4;border-right:1px solid #f4f4f4;box-sizing:border-box"></div>
<div style="left:603px;top:235.5px;width:67px;height:16.5px;border-top:1px solid #404040;border-left:1px solid #404040;border-bottom:1px solid #d4d0c8;border-right:1px solid #d4d0c8;box-sizing:border-box"></div>
<div style="left:656px;top:236.5px;width:13px;height:14.5px;background:#d4d0c8;border-top:1px solid #fff;border-left:1px solid #fff;border-bottom:1px solid #404040;border-right:1px solid #404040;box-sizing:border-box"></div>
<div style="left:657px;top:237.5px;width:11px;height:12.5px;border-bottom:1px solid #808080;border-right:1px solid #808080;box-sizing:border-box"></div>
<div style="left:659.0px;top:242.25px;width:0;height:0;border-left:3.5px solid transparent;border-right:3.5px solid transparent;border-top:4px solid #000"></div>
<div class="t" style="left:603.26px;top:233.20px;font-size:11.34px;font-weight:bold;color:#0a0a90;transform:scaleX(0.8722);">INSP</div>
<div class="t" style="left:744.70px;top:217.50px;font-size:10.90px;font-weight:normal;color:#0c0c0c;transform:scaleX(0.9139);-webkit-text-stroke:0.2px #0c0c0c;">Task Effectivity:</div>
<svg style="left:826.4px;top:222.5px" width="8" height="8" viewBox="0 0 8 8"><path d="M1.6 3.6 H6.4 M4 1.6 V3.8 M4 3.8 L2.6 6 M4 3.8 L5.4 6" stroke="#ff0a0a" stroke-width="1.05"/></svg>
<div style="left:681px;top:234.5px;width:194.5px;height:18.5px;background:#fff;border-top:1px solid #808080;border-left:1px solid #808080;border-bottom:1px solid #f4f4f4;border-right:1px solid #f4f4f4;box-sizing:border-box"></div>
<div style="left:682px;top:235.5px;width:192.5px;height:16.5px;border-top:1px solid #404040;border-left:1px solid #404040;border-bottom:1px solid #d4d0c8;border-right:1px solid #d4d0c8;box-sizing:border-box"></div>
<div style="left:860.5px;top:236.5px;width:13px;height:14.5px;background:#d4d0c8;border-top:1px solid #fff;border-left:1px solid #fff;border-bottom:1px solid #404040;border-right:1px solid #404040;box-sizing:border-box"></div>
<div style="left:861.5px;top:237.5px;width:11px;height:12.5px;border-bottom:1px solid #808080;border-right:1px solid #808080;box-sizing:border-box"></div>
<div style="left:863.5px;top:242.25px;width:0;height:0;border-left:3.5px solid transparent;border-right:3.5px solid transparent;border-top:4px solid #000"></div>
<div class="t" style="left:682.91px;top:233.20px;font-size:11.34px;font-weight:bold;color:#0a0a90;transform:scaleX(0.8086);">TEST OF THE EFFECTIVITY</div>
<div class="t" style="left:898.18px;top:217.50px;font-size:10.90px;font-weight:normal;color:#0c0c0c;transform:scaleX(0.9380);-webkit-text-stroke:0.2px #0c0c0c;">MNHR:</div>
<div style="left:886px;top:234px;width:59px;height:20px;background:#fff;border:1px solid #4a4a4a;border-radius:1px;box-sizing:border-box"></div>
<div style="left:887px;top:235px;width:57px;height:18px;border-top:1px solid #b0b0b0;border-left:1px solid #b0b0b0;box-sizing:border-box"></div>
<div class="t" style="left:1024.84px;top:217.50px;font-size:10.90px;font-weight:normal;color:#0c0c0c;transform:scaleX(0.9858);-webkit-text-stroke:0.2px #0c0c0c;">JIC:</div>
<div style="left:954px;top:234px;width:135px;height:20px;background:#fff;border:1px solid #4a4a4a;border-radius:1px;box-sizing:border-box"></div>
<div style="left:955px;top:235px;width:133px;height:18px;border-top:1px solid #b0b0b0;border-left:1px solid #b0b0b0;box-sizing:border-box"></div>
<div class="t" style="left:611.69px;top:253.90px;font-size:10.90px;font-weight:normal;color:#0c0c0c;transform:scaleX(0.9316);-webkit-text-stroke:0.2px #0c0c0c;">Main Zone:</div>
<div style="left:602px;top:271px;width:69px;height:19px;background:#fff;border-top:1px solid #808080;border-left:1px solid #808080;border-bottom:1px solid #f4f4f4;border-right:1px solid #f4f4f4;box-sizing:border-box"></div>
<div style="left:603px;top:272px;width:67px;height:17px;border-top:1px solid #404040;border-left:1px solid #404040;border-bottom:1px solid #d4d0c8;border-right:1px solid #d4d0c8;box-sizing:border-box"></div>
<div style="left:656px;top:273px;width:13px;height:15px;background:#d4d0c8;border-top:1px solid #fff;border-left:1px solid #fff;border-bottom:1px solid #404040;border-right:1px solid #404040;box-sizing:border-box"></div>
<div style="left:657px;top:274px;width:11px;height:13px;border-bottom:1px solid #808080;border-right:1px solid #808080;box-sizing:border-box"></div>
<div style="left:659.0px;top:279.0px;width:0;height:0;border-left:3.5px solid transparent;border-right:3.5px solid transparent;border-top:4px solid #000"></div>
<div class="t" style="left:603.57px;top:269.60px;font-size:11.34px;font-weight:bold;color:#0a0a90;transform:scaleX(0.9592);">200</div>
<div class="t" style="left:732.80px;top:253.90px;font-size:10.90px;font-weight:normal;color:#0c0c0c;transform:scaleX(0.9437);-webkit-text-stroke:0.2px #0c0c0c;">Additional Zones:</div>
<div style="left:681px;top:271px;width:195px;height:19px;background:#fff;border:1px solid #303030;border-top:2px solid #404040;border-left:2px solid #404040;box-sizing:border-box"></div>
<div class="t" style="left:758.78px;top:269.00px;font-size:11.34px;font-weight:bold;color:#0a0a90;transform:scaleX(0.9293);">240,230</div>
<div class="t" style="left:888.75px;top:253.90px;font-size:10.90px;font-weight:normal;color:#0c0c0c;transform:scaleX(0.9705);-webkit-text-stroke:0.2px #0c0c0c;">MRB Code:</div>
<div style="left:886px;top:271px;width:58px;height:19px;background:#c0f8f8;border-top:1px solid #808080;border-left:1px solid #808080;border-bottom:1px solid #f4f4f4;border-right:1px solid #f4f4f4;box-sizing:border-box"></div>
<div style="left:887px;top:272px;width:56px;height:17px;border-top:1px solid #404040;border-left:1px solid #404040;border-bottom:1px solid #d4d0c8;border-right:1px solid #d4d0c8;box-sizing:border-box"></div>
<div style="left:929px;top:273px;width:13px;height:15px;background:#d4d0c8;border-top:1px solid #fff;border-left:1px solid #fff;border-bottom:1px solid #404040;border-right:1px solid #404040;box-sizing:border-box"></div>
<div style="left:930px;top:274px;width:11px;height:13px;border-bottom:1px solid #808080;border-right:1px solid #808080;box-sizing:border-box"></div>
<div style="left:932.0px;top:279.0px;width:0;height:0;border-left:3.5px solid transparent;border-right:3.5px solid transparent;border-top:4px solid #000"></div>
<div class="t" style="left:965.71px;top:250.40px;font-size:10.90px;font-weight:normal;color:#0c0c0c;transform:scaleX(0.9046);-webkit-text-stroke:0.2px #0c0c0c;">NOTE:</div>
<div style="left:954px;top:265px;width:135px;height:28px;background:#fff;border:1px solid #4a4a4a;border-radius:1px;box-sizing:border-box"></div>
<div style="left:955px;top:266px;width:133px;height:26px;border-top:1px solid #b0b0b0;border-left:1px solid #b0b0b0;box-sizing:border-box"></div>
<div style="left:602px;top:295px;width:490px;height:19px;background:#d4d0c8"></div>
<div style="left:602px;top:313px;width:490px;height:1px;background:#404040"></div>
<div style="left:602px;top:314px;width:490px;height:1px;background:#fff"></div>
<div style="left:602px;top:294px;width:60px;height:20px;background:#d4d0c8;border-left:1px solid #fff;border-top:1px solid #fff;border-right:1px solid #404040;box-sizing:border-box"></div>
<svg style="left:607px;top:296px" width="14" height="14" viewBox="0 0 14 14"><rect x="1.5" y="2.5" width="9" height="10" fill="#fffef0" stroke="#e0b050"/><rect x="3.5" y="1" width="5" height="2.5" fill="#8a8a8a"/><path d="M3 5 H8 M3 7 H7 M3 9 H6" stroke="#c8c8c8" stroke-width="0.8"/><path d="M6 11 L11.5 3" stroke="#e8a020" stroke-width="2"/><path d="M10.5 2 L12 3.2" stroke="#c04020" stroke-width="1.5"/></svg>
<div class="t" style="left:625.66px;top:293.30px;font-size:10.47px;font-weight:normal;color:#111;transform:scaleX(0.8868);-webkit-text-stroke:0.2px #111;">Interval</div>
<div style="left:662px;top:296px;width:71px;height:17px;background:#d4d0c8;border-left:1px solid #fff;border-top:1px solid #fff;border-right:1px solid #404040;box-sizing:border-box"></div>
<div class="t" style="left:665.39px;top:295.00px;font-size:10.47px;font-weight:normal;color:#111;transform:scaleX(0.8715);-webkit-text-stroke:0.2px #111;">Start Threshold</div>
<div style="left:733px;top:296px;width:75px;height:17px;background:#d4d0c8;border-left:1px solid #fff;border-top:1px solid #fff;border-right:1px solid #404040;box-sizing:border-box"></div>
<div class="t" style="left:736.98px;top:295.00px;font-size:10.47px;font-weight:normal;color:#111;transform:scaleX(0.8585);-webkit-text-stroke:0.2px #111;">Finish Threshold</div>
<div style="left:808px;top:296px;width:51px;height:17px;background:#d4d0c8;border-left:1px solid #fff;border-top:1px solid #fff;border-right:1px solid #404040;box-sizing:border-box"></div>
<div class="t" style="left:813.71px;top:295.00px;font-size:10.47px;font-weight:normal;color:#111;transform:scaleX(0.9187);-webkit-text-stroke:0.2px #111;">Tolerance</div>
<div style="left:859px;top:296px;width:56px;height:17px;background:#d4d0c8;border-left:1px solid #fff;border-top:1px solid #fff;border-right:1px solid #404040;box-sizing:border-box"></div>
<div class="t" style="left:862.56px;top:295.00px;font-size:10.47px;font-weight:normal;color:#111;transform:scaleX(0.8885);-webkit-text-stroke:0.2px #111;">Instructions</div>
<div style="left:915px;top:296px;width:70.5px;height:17px;background:#d4d0c8;border-left:1px solid #fff;border-top:1px solid #fff;border-right:1px solid #404040;box-sizing:border-box"></div>
<div class="t" style="left:919.07px;top:295.00px;font-size:10.47px;font-weight:normal;color:#111;transform:scaleX(0.8762);-webkit-text-stroke:0.2px #111;">Post Threshold</div>
<div style="left:985.5px;top:296px;width:32px;height:17px;background:#d4d0c8;border-left:1px solid #fff;border-top:1px solid #fff;border-right:1px solid #404040;box-sizing:border-box"></div>
<div class="t" style="left:988.92px;top:295.00px;font-size:10.47px;font-weight:normal;color:#111;transform:scaleX(0.8092);-webkit-text-stroke:0.2px #111;">LUMP</div>
<div style="left:602px;top:323px;width:490px;height:85px;border:1px solid #949494;box-sizing:border-box"></div>
<div style="left:603px;top:324px;width:488px;height:83px;border-left:1px solid #fff;border-top:1px solid #fff;box-sizing:border-box"></div>
<div style="left:607px;top:321px;width:42px;height:4px;background:#dcdcf4"></div>
<div class="t" style="left:608.35px;top:313.90px;font-size:10.47px;font-weight:bold;color:#111;transform:scaleX(0.9607);-webkit-text-stroke:0.35px #111">Interval:</div>
<div style="left:669px;top:321px;width:13px;height:4px;background:#dcdcf4"></div>
<svg style="left:668.7px;top:317.5px" width="8" height="8" viewBox="0 0 8 8"><path d="M1.6 3.6 H6.4 M4 1.6 V3.8 M4 3.8 L2.6 6 M4 3.8 L5.4 6" stroke="#ff0a0a" stroke-width="1.05"/></svg>
<div class="t" style="left:645.14px;top:334.60px;font-size:10.90px;font-weight:normal;color:#0c0c0c;transform:scaleX(0.9840);-webkit-text-stroke:0.2px #0c0c0c;">FH:</div>
<div class="t" style="left:736.87px;top:334.60px;font-size:10.90px;font-weight:normal;color:#0c0c0c;transform:scaleX(0.9522);-webkit-text-stroke:0.2px #0c0c0c;">FC:</div>
<div class="t" style="left:804.64px;top:321.10px;font-size:10.90px;font-weight:normal;color:#0c0c0c;transform:scaleX(0.9840);-webkit-text-stroke:0.2px #0c0c0c;">DY:</div>
<div class="t" style="left:838.10px;top:321.10px;font-size:10.90px;font-weight:normal;color:#0c0c0c;transform:scaleX(0.9227);-webkit-text-stroke:0.2px #0c0c0c;">MO:</div>
<div class="t" style="left:873.80px;top:321.10px;font-size:10.90px;font-weight:normal;color:#0c0c0c;transform:scaleX(0.9173);-webkit-text-stroke:0.2px #0c0c0c;">YR:</div>
<div style="left:809px;top:340px;width:10px;height:10px;background:#fff;border-top:1px solid #808080;border-left:1px solid #808080;border-bottom:1px solid #e8e8e8;border-right:1px solid #e8e8e8;box-sizing:border-box"></div>
<div style="left:810px;top:341px;width:8px;height:8px;border-top:1px solid #404040;border-left:1px solid #404040;box-sizing:border-box"></div>
<div style="left:843px;top:339.5px;width:10px;height:10px;background:#fff;border-top:1px solid #808080;border-left:1px solid #808080;border-bottom:1px solid #e8e8e8;border-right:1px solid #e8e8e8;box-sizing:border-box"></div>
<div style="left:844px;top:340.5px;width:8px;height:8px;border-top:1px solid #404040;border-left:1px solid #404040;box-sizing:border-box"></div>
<svg style="left:843px;top:339.5px" width="10" height="10"><path d="M2.2 4.8 L4.2 7 L8 2.6" stroke="#000" stroke-width="1.6" fill="none"/></svg>
<div style="left:877px;top:339.5px;width:10px;height:10px;background:#fff;border-top:1px solid #808080;border-left:1px solid #808080;border-bottom:1px solid #e8e8e8;border-right:1px solid #e8e8e8;box-sizing:border-box"></div>
<div style="left:878px;top:340.5px;width:8px;height:8px;border-top:1px solid #404040;border-left:1px solid #404040;box-sizing:border-box"></div>
<div style="left:614px;top:353px;width:81px;height:16.5px;background:#fff;border:1px solid #4a4a4a;border-radius:1px;box-sizing:border-box"></div>
<div style="left:615px;top:354px;width:79px;height:14.5px;border-top:1px solid #b0b0b0;border-left:1px solid #b0b0b0;box-sizing:border-box"></div>
<div class="t" style="left:641.76px;top:350.75px;font-size:10.90px;font-weight:bold;color:#0a0a90;transform:scaleX(0.9733);">1000</div>
<div style="left:704px;top:353px;width:82px;height:16.5px;background:#fff;border:1px solid #4a4a4a;border-radius:1px;box-sizing:border-box"></div>
<div style="left:705px;top:354px;width:80px;height:14.5px;border-top:1px solid #b0b0b0;border-left:1px solid #b0b0b0;box-sizing:border-box"></div>
<div class="t" style="left:734.97px;top:350.75px;font-size:10.90px;font-weight:bold;color:#0a0a90;transform:scaleX(1.0205);">500</div>
<div style="left:807px;top:353px;width:81px;height:16.5px;background:#fff;border:1px solid #4a4a4a;border-radius:1px;box-sizing:border-box"></div>
<div style="left:808px;top:354px;width:79px;height:14.5px;border-top:1px solid #b0b0b0;border-left:1px solid #b0b0b0;box-sizing:border-box"></div>
<div class="t" style="left:843.90px;top:350.45px;font-size:10.90px;font-weight:normal;color:#0a0a90;transform:scaleX(1.0511);-webkit-text-stroke:0.2px #0a0a90;font-weight:bold">3</div>
<div style="left:614px;top:375.5px;width:10px;height:10px;background:#fff;border-top:1px solid #808080;border-left:1px solid #808080;border-bottom:1px solid #e8e8e8;border-right:1px solid #e8e8e8;box-sizing:border-box"></div>
<div style="left:615px;top:376.5px;width:8px;height:8px;border-top:1px solid #404040;border-left:1px solid #404040;box-sizing:border-box"></div>
<div class="t" style="left:627.08px;top:369.40px;font-size:10.90px;font-weight:normal;color:#0c0c0c;transform:scaleX(0.9351);-webkit-text-stroke:0.2px #0c0c0c;">:APU Data</div>
<div class="t" style="left:743.99px;top:367.00px;font-size:10.90px;font-weight:normal;color:#0c0c0c;transform:scaleX(0.9275);-webkit-text-stroke:0.2px #0c0c0c;">DOC. Reference Data:</div>
<div style="left:704px;top:384px;width:184px;height:18px;background:#fff;border:1px solid #4a4a4a;border-radius:1px;box-sizing:border-box"></div>
<div style="left:705px;top:385px;width:182px;height:16px;border-top:1px solid #b0b0b0;border-left:1px solid #b0b0b0;box-sizing:border-box"></div>
<div style="left:908.6px;top:330.5px;width:10.5px;height:10.5px;background:#fff;border-top:1px solid #808080;border-left:1px solid #808080;border-bottom:1px solid #e8e8e8;border-right:1px solid #e8e8e8;box-sizing:border-box"></div>
<div style="left:909.6px;top:331.5px;width:8.5px;height:8.5px;border-top:1px solid #404040;border-left:1px solid #404040;box-sizing:border-box"></div>
<div class="t" style="left:922.66px;top:324.60px;font-size:10.90px;font-weight:normal;color:#0c0c0c;transform:scaleX(0.9540);-webkit-text-stroke:0.2px #0c0c0c;">:Whichever Comes Last</div>
<div style="left:908.6px;top:349px;width:10.5px;height:10.5px;background:#fff;border-top:1px solid #808080;border-left:1px solid #808080;border-bottom:1px solid #e8e8e8;border-right:1px solid #e8e8e8;box-sizing:border-box"></div>
<div style="left:909.6px;top:350px;width:8.5px;height:8.5px;border-top:1px solid #404040;border-left:1px solid #404040;box-sizing:border-box"></div>
<div class="t" style="left:922.66px;top:343.00px;font-size:10.90px;font-weight:normal;color:#0c0c0c;transform:scaleX(0.9537);-webkit-text-stroke:0.2px #0c0c0c;">:Completed By Component Replm.</div>
<div class="t" style="left:974.45px;top:357.50px;font-size:10.90px;font-weight:normal;color:#0c0c0c;transform:scaleX(0.9707);-webkit-text-stroke:0.2px #0c0c0c;">Reference:</div>
<div style="left:898px;top:374.5px;width:190px;height:25.5px;background:#fff;border:1px solid #4a4a4a;border-radius:1px;box-sizing:border-box"></div>
<div style="left:899px;top:375.5px;width:188px;height:23.5px;border-top:1px solid #b0b0b0;border-left:1px solid #b0b0b0;box-sizing:border-box"></div>
<div style="left:602px;top:411px;width:490px;height:19px;background:#d4d0c8"></div>
<div style="left:602px;top:429px;width:490px;height:1px;background:#404040"></div>
<div style="left:602px;top:430px;width:490px;height:1px;background:#fff"></div>
<div style="left:602px;top:410px;width:66px;height:20px;background:#d4d0c8;border-left:1px solid #fff;border-top:1px solid #fff;border-right:1px solid #404040;box-sizing:border-box"></div>
<svg style="left:607px;top:412px" width="14" height="14" viewBox="0 0 14 14"><rect x="1.5" y="2.5" width="9" height="10" fill="#fffef0" stroke="#e0b050"/><rect x="3.5" y="1" width="5" height="2.5" fill="#8a8a8a"/><path d="M3 5 H8 M3 7 H7 M3 9 H6" stroke="#c8c8c8" stroke-width="0.8"/><path d="M6 11 L11.5 3" stroke="#e8a020" stroke-width="2"/><path d="M10.5 2 L12 3.2" stroke="#c04020" stroke-width="1.5"/></svg>
<div class="t" style="left:625.78px;top:408.80px;font-size:10.47px;font-weight:normal;color:#111;transform:scaleX(0.8653);-webkit-text-stroke:0.2px #111;">Doc. Ref</div>
<div style="left:668px;top:412px;width:77.5px;height:17px;background:#d4d0c8;border-left:1px solid #fff;border-top:1px solid #fff;border-right:1px solid #404040;box-sizing:border-box"></div>
<svg style="left:673px;top:414px" width="11" height="11" viewBox="0 0 11 11"><path d="M1 1.5 L5.5 3.2 L10 1.8 L7 5.5 L5.3 10 L4 5.5Z" fill="#10e020" stroke="#000" stroke-width="1.1" stroke-linejoin="round"/></svg>
<div class="t" style="left:689.59px;top:410.70px;font-size:10.47px;font-weight:normal;color:#111;transform:scaleX(0.8676);-webkit-text-stroke:0.2px #111;">Special Insp.</div>
<div style="left:745.5px;top:412px;width:37px;height:17px;background:#d4d0c8;border-left:1px solid #fff;border-top:1px solid #fff;border-right:1px solid #404040;box-sizing:border-box"></div>
<div class="t" style="left:750.09px;top:410.70px;font-size:10.47px;font-weight:normal;color:#111;transform:scaleX(0.8501);-webkit-text-stroke:0.2px #111;">Panels</div>
<div style="left:782.6px;top:412px;width:45.4px;height:17px;background:#d4d0c8;border-left:1px solid #fff;border-top:1px solid #fff;border-right:1px solid #404040;box-sizing:border-box"></div>
<div class="t" style="left:786.99px;top:410.70px;font-size:10.47px;font-weight:normal;color:#111;transform:scaleX(0.8488);-webkit-text-stroke:0.2px #111;">Materials</div>
<div style="left:828px;top:412px;width:32px;height:17px;background:#d4d0c8;border-left:1px solid #fff;border-top:1px solid #fff;border-right:1px solid #404040;box-sizing:border-box"></div>
<div class="t" style="left:832.30px;top:410.70px;font-size:10.47px;font-weight:normal;color:#111;transform:scaleX(0.9430);-webkit-text-stroke:0.2px #111;">Tools</div>
<div style="left:860px;top:412px;width:65.5px;height:17px;background:#d4d0c8;border-left:1px solid #fff;border-top:1px solid #fff;border-right:1px solid #404040;box-sizing:border-box"></div>
<div class="t" style="left:864.47px;top:410.70px;font-size:10.47px;font-weight:normal;color:#111;transform:scaleX(0.8432);-webkit-text-stroke:0.2px #111;">JIC Procedure</div>
<div style="left:925.5px;top:412px;width:39px;height:17px;background:#d4d0c8;border-left:1px solid #fff;border-top:1px solid #fff;border-right:1px solid #404040;box-sizing:border-box"></div>
<div class="t" style="left:930.34px;top:410.70px;font-size:10.47px;font-weight:normal;color:#111;transform:scaleX(0.8757);-webkit-text-stroke:0.2px #111;">Control</div>
<div style="left:1057px;top:411px;width:30px;height:17px;background:#ffffcc;border-top:1px solid #fff;border-left:1px solid #fff;border-bottom:1px solid #404040;border-right:1px solid #404040;box-sizing:border-box"></div>
<div style="left:1058px;top:412px;width:28px;height:15px;border-bottom:1px solid #808080;border-right:1px solid #808080;box-sizing:border-box"></div>
<div class="t" style="left:1071.20px;top:408.90px;font-size:10.90px;font-weight:normal;color:#111;transform:scaleX(0.8613);-webkit-text-stroke:0.2px #111;">Att</div>
<div style="left:602px;top:437px;width:492px;height:200px;border:1px solid #949494;box-sizing:border-box"></div>
<div style="left:603px;top:438px;width:490px;height:198px;border-left:1px solid #fff;border-top:1px solid #fff;box-sizing:border-box"></div>
<div style="left:607px;top:435px;width:137px;height:4px;background:#dcdcf4"></div>
<div class="t" style="left:608.66px;top:427.60px;font-size:10.47px;font-weight:bold;color:#111;transform:scaleX(0.9459);-webkit-text-stroke:0.25px #111">Document Reference Editor:</div>
<div style="left:614px;top:449px;width:92px;height:17px;background:#fff;border:1px solid #4a4a4a;border-radius:1px;box-sizing:border-box"></div>
<div style="left:615px;top:450px;width:90px;height:15px;border-top:1px solid #b0b0b0;border-left:1px solid #b0b0b0;box-sizing:border-box"></div>
<div style="left:614px;top:467px;width:308px;height:162px;background:#fff;border:1px solid #404040;border-top:2px solid #404040;box-sizing:border-box"></div>
<div class="t" style="left:616px;top:464.65px;font-size:11.77px;color:#111;-webkit-text-stroke:0.2px #111;transform:scaleX(0.88)">AD</div>
<div class="t" style="left:655px;top:464.65px;font-size:11.77px;color:#111;-webkit-text-stroke:0.2px #111;transform:scaleX(0.88)">2021-11-24</div>
<div class="t" style="left:616px;top:477.92px;font-size:11.77px;color:#111;-webkit-text-stroke:0.2px #111;transform:scaleX(0.88)">AD</div>
<div class="t" style="left:655px;top:477.92px;font-size:11.77px;color:#111;-webkit-text-stroke:0.2px #111;transform:scaleX(0.88)">74-08-09</div>
<div class="t" style="left:616px;top:491.19px;font-size:11.77px;color:#111;-webkit-text-stroke:0.2px #111;transform:scaleX(0.88)">AD</div>
<div class="t" style="left:655px;top:491.19px;font-size:11.77px;color:#111;-webkit-text-stroke:0.2px #111;transform:scaleX(0.88)">FAA 2021-14-20</div>
<div class="t" style="left:616px;top:504.46px;font-size:11.77px;color:#111;-webkit-text-stroke:0.2px #111;transform:scaleX(0.88)">AD</div>
<div class="t" style="left:655px;top:504.46px;font-size:11.77px;color:#111;-webkit-text-stroke:0.2px #111;transform:scaleX(0.88)">US-2005-18-23</div>
<div class="t" style="left:616px;top:517.73px;font-size:11.77px;color:#111;-webkit-text-stroke:0.2px #111;transform:scaleX(0.88)">AD</div>
<div class="t" style="left:655px;top:517.73px;font-size:11.77px;color:#111;-webkit-text-stroke:0.2px #111;transform:scaleX(0.88)">US-2006-21-01</div>
<div class="t" style="left:616px;top:531.00px;font-size:11.77px;color:#111;-webkit-text-stroke:0.2px #111;transform:scaleX(0.88)">AD</div>
<div class="t" style="left:655px;top:531.00px;font-size:11.77px;color:#111;-webkit-text-stroke:0.2px #111;transform:scaleX(0.88)">US-2011-27-03</div>
<div class="t" style="left:616px;top:544.27px;font-size:11.77px;color:#111;-webkit-text-stroke:0.2px #111;transform:scaleX(0.88)">AD</div>
<div class="t" style="left:655px;top:544.27px;font-size:11.77px;color:#111;-webkit-text-stroke:0.2px #111;transform:scaleX(0.88)">US-2019-18-03</div>
<div class="t" style="left:616px;top:557.54px;font-size:11.77px;color:#111;-webkit-text-stroke:0.2px #111;transform:scaleX(0.88)">AD</div>
<div class="t" style="left:655px;top:557.54px;font-size:11.77px;color:#111;-webkit-text-stroke:0.2px #111;transform:scaleX(0.88)">US-2020-16-51</div>
<div class="t" style="left:616px;top:570.81px;font-size:11.77px;color:#111;-webkit-text-stroke:0.2px #111;transform:scaleX(0.88)">AJTL</div>
<div class="t" style="left:655px;top:570.81px;font-size:11.77px;color:#111;-webkit-text-stroke:0.2px #111;transform:scaleX(0.88)">004490-1</div>
<div class="t" style="left:616px;top:584.08px;font-size:11.77px;color:#111;-webkit-text-stroke:0.2px #111;transform:scaleX(0.88)">AMM</div>
<div class="t" style="left:655px;top:584.08px;font-size:11.77px;color:#111;-webkit-text-stroke:0.2px #111;transform:scaleX(0.88)">05-41-01-210</div>
<div class="t" style="left:616px;top:597.35px;font-size:11.77px;color:#111;-webkit-text-stroke:0.2px #111;transform:scaleX(0.88)">AMM</div>
<div class="t" style="left:655px;top:597.35px;font-size:11.77px;color:#111;-webkit-text-stroke:0.2px #111;transform:scaleX(0.88)">05-41-01-211</div>
<div class="t" style="left:616px;top:610.62px;font-size:11.77px;color:#111;-webkit-text-stroke:0.2px #111;transform:scaleX(0.88)">AMM</div>
<div class="t" style="left:655px;top:610.62px;font-size:11.77px;color:#111;-webkit-text-stroke:0.2px #111;transform:scaleX(0.88)">05-41-02-210</div>
<div style="left:908px;top:468px;width:14px;height:160px;background:#ebeae6"></div>
<div style="left:908px;top:468px;width:14px;height:12px;background:#d4d0c8;border-top:1px solid #fff;border-left:1px solid #fff;border-bottom:1px solid #404040;border-right:1px solid #404040;box-sizing:border-box"></div>
<div style="left:909px;top:469px;width:12px;height:10px;border-bottom:1px solid #808080;border-right:1px solid #808080;box-sizing:border-box"></div>
<div style="left:908px;top:480px;width:14px;height:8px;background:#d4d0c8;border-top:1px solid #fff;border-left:1px solid #fff;border-bottom:1px solid #404040;border-right:1px solid #404040;box-sizing:border-box"></div>
<div style="left:909px;top:481px;width:12px;height:6px;border-bottom:1px solid #808080;border-right:1px solid #808080;box-sizing:border-box"></div>
<div style="left:908px;top:614px;width:14px;height:13px;background:#d4d0c8;border-top:1px solid #fff;border-left:1px solid #fff;border-bottom:1px solid #404040;border-right:1px solid #404040;box-sizing:border-box"></div>
<div style="left:909px;top:615px;width:12px;height:11px;border-bottom:1px solid #808080;border-right:1px solid #808080;box-sizing:border-box"></div>
<div style="left:911.5px;top:472px;width:0;height:0;border-left:3.5px solid transparent;border-right:3.5px solid transparent;border-bottom:4px solid #000"></div>
<div style="left:911.5px;top:618.5px;width:0;height:0;border-left:3.5px solid transparent;border-right:3.5px solid transparent;border-top:4px solid #000"></div>
<div class="t" style="left:959.19px;top:460.70px;font-size:10.90px;font-weight:normal;color:#0c0c0c;transform:scaleX(0.9263);-webkit-text-stroke:0.2px #0c0c0c;">Doc. Type:</div>
<svg style="left:1020.7px;top:465px" width="8" height="8" viewBox="0 0 8 8"><path d="M1.6 3.6 H6.4 M4 1.6 V3.8 M4 3.8 L2.6 6 M4 3.8 L5.4 6" stroke="#ff0a0a" stroke-width="1.05"/></svg>
<div style="left:932px;top:476.5px;width:114px;height:18px;background:#fff;border-top:1px solid #808080;border-left:1px solid #808080;border-bottom:1px solid #f4f4f4;border-right:1px solid #f4f4f4;box-sizing:border-box"></div>
<div style="left:933px;top:477.5px;width:112px;height:16px;border-top:1px solid #404040;border-left:1px solid #404040;border-bottom:1px solid #d4d0c8;border-right:1px solid #d4d0c8;box-sizing:border-box"></div>
<div style="left:1031px;top:478.5px;width:13px;height:14px;background:#d4d0c8;border-top:1px solid #fff;border-left:1px solid #fff;border-bottom:1px solid #404040;border-right:1px solid #404040;box-sizing:border-box"></div>
<div style="left:1032px;top:479.5px;width:11px;height:12px;border-bottom:1px solid #808080;border-right:1px solid #808080;box-sizing:border-box"></div>
<div style="left:1034.0px;top:484.0px;width:0;height:0;border-left:3.5px solid transparent;border-right:3.5px solid transparent;border-top:4px solid #000"></div>
<div class="t" style="left:933.75px;top:475.40px;font-size:11.05px;font-weight:bold;color:#0a0a90;transform:scaleX(0.9131);">AMM</div>
<div class="t" style="left:938.57px;top:496.10px;font-size:10.90px;font-weight:normal;color:#0c0c0c;transform:scaleX(0.9538);-webkit-text-stroke:0.2px #0c0c0c;">Document Reference:</div>
<svg style="left:1055px;top:501px" width="8" height="8" viewBox="0 0 8 8"><path d="M1.6 3.6 H6.4 M4 1.6 V3.8 M4 3.8 L2.6 6 M4 3.8 L5.4 6" stroke="#ff0a0a" stroke-width="1.05"/></svg>
<div style="left:932px;top:513px;width:160px;height:64px;background:#fff;border:1px solid #4a4a4a;border-radius:1px;box-sizing:border-box"></div>
<div style="left:933px;top:514px;width:158px;height:62px;border-top:1px solid #b0b0b0;border-left:1px solid #b0b0b0;box-sizing:border-box"></div>
<div class="t" style="left:933.19px;top:510.80px;font-size:11.05px;font-weight:bold;color:#0a0a90;transform:scaleX(0.9344);">22-234-01</div>
<div style="left:977px;top:585.5px;width:59px;height:37px;background:#c8c8f8;border-top:1px solid #fff;border-left:1px solid #fff;border-bottom:1px solid #404040;border-right:1px solid #404040;box-sizing:border-box"></div>
<div style="left:978px;top:586.5px;width:57px;height:35px;border-bottom:1px solid #808080;border-right:1px solid #808080;box-sizing:border-box"></div>
<svg style="left:994px;top:586px" width="24" height="21" viewBox="0 0 24 21"><path d="M12 2.5 V20 M3 10.5 H22" stroke="#404848" stroke-width="5"/><path d="M11.5 1.5 V19 M2 9.7 H21" stroke="#ffffff" stroke-width="5.4"/><path d="M11.5 2 V18.5 M2.5 9.7 H20.5" stroke="#20a0a0" stroke-width="4.2"/><path d="M10.5 2 V9.7 H2.5" stroke="#20f8f8" stroke-width="2.2" fill="none"/></svg>
<div class="t" style="left:997.50px;top:601.90px;font-size:10.90px;font-weight:normal;color:#111;transform:scaleX(0.9067);-webkit-text-stroke:0.2px #111;">Add</div>
<div style="left:1045.5px;top:585.5px;width:50px;height:37px;background:#c8c8f8;border-top:1px solid #fff;border-left:1px solid #fff;border-bottom:1px solid #404040;border-right:1px solid #404040;box-sizing:border-box"></div>
<div style="left:1046.5px;top:586.5px;width:48px;height:35px;border-bottom:1px solid #808080;border-right:1px solid #808080;box-sizing:border-box"></div>
<div style="left:1067px;top:589px;width:16px;height:15px;background:#c8c4c8"></div>
<svg style="left:1068px;top:589px" width="16" height="16" viewBox="0 0 16 16"><path d="M3 1.5 H9 V12.5 H3Z" fill="#fff" stroke="#000"/><path d="M3 2 L7.5 4 V14.5 L3 12.5 Z" fill="#a8a020" stroke="#000" stroke-width="0.8"/><path d="M9 13.5 Q10.5 11 12.5 11" stroke="#2020c0" stroke-width="1.3" fill="none"/><path d="M11.5 9 L14 11 L11.5 12.5Z" fill="#2020c0"/></svg>
<div class="t" style="left:1060.23px;top:602.75px;font-size:9.45px;font-weight:normal;color:#111;transform:scaleX(1.2160);-webkit-text-stroke:0.2px #111;">Clos</div>
<div style="left:0px;top:629px;width:1086px;height:1px;background:#f6f6fa"></div>
<div style="left:1083px;top:17px;width:3px;height:613px;background:#eef0fa"></div>
<svg style="left:0px;top:0px" width="1086" height="630" viewBox="0 0 1086 630"><path d="M563.1 516.7 L632.4 456.3 L547.8 492.4Z" fill="#1496ff"/><circle cx="545.8" cy="510.6" r="19.1" fill="none" stroke="#e8e8e8" stroke-width="0.8"/><circle cx="545.8" cy="510.6" r="18.3" fill="none" stroke="#222" stroke-width="1.1"/><circle cx="545.8" cy="510.6" r="17.3" fill="#fff"/><circle cx="545.8" cy="510.6" r="16.8" fill="#1496ff"/><text x="545.8" y="517.85" text-anchor="middle" font-family="Liberation Sans" font-weight="bold" font-size="16.8" fill="#fff" transform="translate(545.8 0) scale(1.26 1) translate(-545.8 0)">8</text></svg>
<svg style="left:0px;top:0px" width="1086" height="630" viewBox="0 0 1086 630"><path d="M789.5 582.5 L709.5 556.4 L776.0 607.8Z" fill="#1496ff"/><circle cx="792.8" cy="600.5" r="19.1" fill="none" stroke="#e8e8e8" stroke-width="0.8"/><circle cx="792.8" cy="600.5" r="18.3" fill="none" stroke="#222" stroke-width="1.1"/><circle cx="792.8" cy="600.5" r="17.3" fill="#fff"/><circle cx="792.8" cy="600.5" r="16.8" fill="#1496ff"/><text x="792.8" y="607.75" text-anchor="middle" font-family="Liberation Sans" font-weight="bold" font-size="16.8" fill="#fff" transform="translate(792.8 0) scale(1.21 1) translate(-792.8 0)">9</text></svg>
<svg style="left:0px;top:0px" width="1086" height="630" viewBox="0 0 1086 630"><path d="M915.5 593.9 L1000.6 605.5 L924.0 566.5Z" fill="#1496ff"/><circle cx="908.9" cy="576.8" r="19.1" fill="none" stroke="#e8e8e8" stroke-width="0.8"/><circle cx="908.9" cy="576.8" r="18.3" fill="none" stroke="#222" stroke-width="1.1"/><circle cx="908.9" cy="576.8" r="17.3" fill="#fff"/><circle cx="908.9" cy="576.8" r="16.8" fill="#1496ff"/><text x="908.9" y="582.8" text-anchor="middle" font-family="Liberation Sans" font-weight="bold" font-size="12.3" fill="#fff" transform="translate(908.9 0) scale(1.14 1) translate(-908.9 0)">10</text></svg>
</body></html>
